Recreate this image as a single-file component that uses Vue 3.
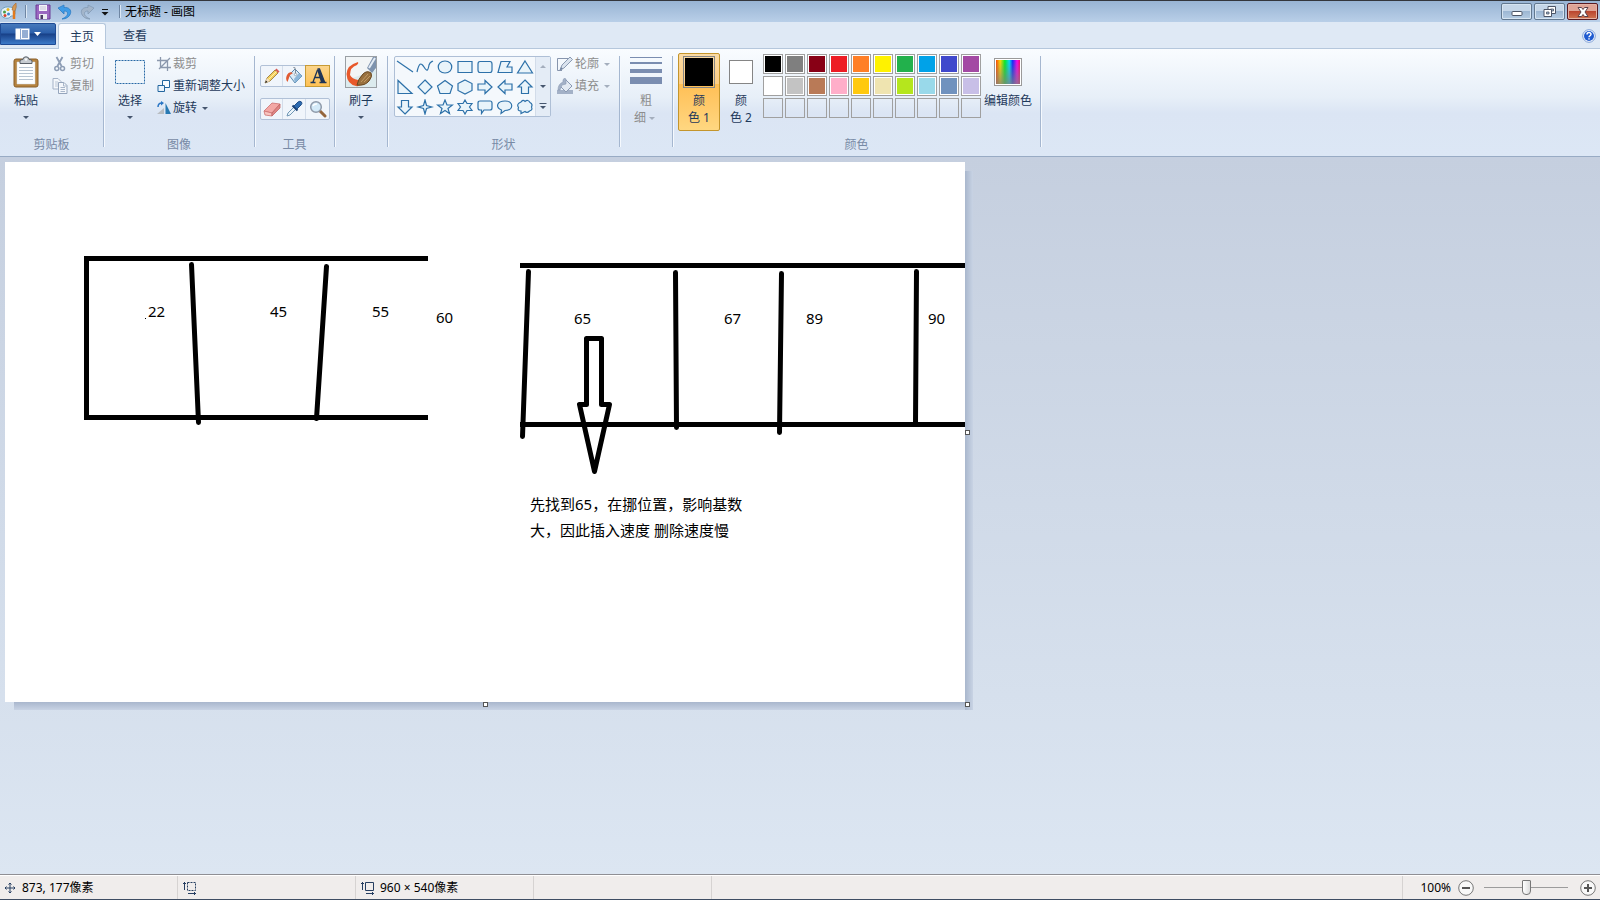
<template>
  <div class="paint">
    <header class="titlebar">
      <svg class="app-icon" width="18" height="18" viewBox="0 0 18 18">
        <path d="M1 11C0 6 4 3.500 9 4C14 4 16 7 15 11C14 14 11 12 10 14C9 16 2 16 1 11Z" fill="#e4f2fa" stroke="#6f9fbd" />
        <circle cx="4.500" cy="9" r="1.500" fill="#4c9c44" />
        <circle cx="8" cy="6.500" r="1.500" fill="#e8b420" />
        <circle cx="5" cy="12.500" r="1.500" fill="#d8432b" />
        <circle cx="8.500" cy="11" r="1.500" fill="#3c82cf" />
        <path d="M14 8V16" stroke="#e27a1e" stroke-width="2.500" />
        <path d="M12 7Q12 3 16 0Q17 4 15 8Z" fill="#d59a55" stroke="#a8652c" stroke-width=".6" />
      </svg>
      <i class="bar-sep"></i>
      <button class="quick" aria-label="保存">
        <svg width="16" height="16" viewBox="0 0 16 16">
          <path d="M1 1H15V15H1Z" fill="#9a66c0" stroke="#6c3d96" />
          <path d="M4 1H12V7H4Z" fill="#f4f4fa" />
          <path d="M5 3H11M5 5H11" stroke="#c6c3d6" />
          <path d="M4 10H12V15H4Z" fill="#ececf2" />
          <path d="M5.500 11H8V15H5.500Z" fill="#4a3a63" />
        </svg>
      </button>
      <button class="quick" aria-label="撤消">
        <svg width="16" height="16" viewBox="0 0 16 16">
          <path d="M1 4L7 1V3.500C12 3 14.500 6 13.500 9.500C12.500 13 9 15 5 15C9 13 10.500 11.500 10.500 9.500C10.500 7.500 9 7 7 7V10Z" fill="#3f9be6" stroke="#2c7cc4" stroke-width=".8" />
        </svg>
      </button>
      <button class="quick" aria-label="重做" disabled>
        <svg width="16" height="16" viewBox="0 0 16 16">
          <path d="M15 4L9 1V3.500C4 3 1.500 6 2.500 9.500C3.500 13 7 15 11 15C7 13 5.500 11.500 5.500 9.500C5.500 7.500 7 7 9 7V10Z" fill="#a3b5ca" stroke="#8199b4" stroke-width=".8" />
        </svg>
      </button>
      <button class="quick narrow" aria-label="自定义快速访问工具栏">
        <svg width="8" height="8" viewBox="0 0 8 8"><path d="M1 1.500H7" stroke="#111" /><path d="M.5 4H7.500L4 7.500Z" fill="#111" /></svg>
      </button>
      <i class="bar-sep"></i>
      <span class="title">无标题 - 画图</span>
      <div class="win-buttons">
        <button aria-label="最小化">
          <svg width="12" height="11" viewBox="0 0 12 11"><rect x="1" y="5.500" width="10" height="4" rx="1" fill="#fff" stroke="#4c5566" /></svg>
        </button>
        <button aria-label="还原">
          <svg width="14" height="11" viewBox="0 0 14 11">
            <path d="M5 .5H12.500V7.500H5Z" fill="#fff" stroke="#4c5566" /><path d="M7.500 3H10.500V5H7.500Z" fill="#9db4cf" stroke="#4c5566" stroke-width=".8" />
            <path d="M1 3.500H8.500V10.500H1Z" fill="#fff" stroke="#4c5566" /><path d="M3.500 6H6V8H3.500Z" fill="#9db4cf" stroke="#4c5566" stroke-width=".8" />
          </svg>
        </button>
        <button class="close" aria-label="关闭">
          <svg width="12" height="10" viewBox="0 0 12 10"><path d="M1 .5H4.500L6 2.500L7.500 .5H11L8 5L11 9.500H7.500L6 7.500L4.500 9.500H1L4 5Z" fill="#fff" stroke="#5b4048" /></svg>
        </button>
      </div>
    </header>

    <nav class="tabs">
      <button class="file-menu" aria-label="文件">
        <svg width="26" height="12" viewBox="0 0 26 12">
          <path d="M.5 .5H14.500V11.500H.5Z" fill="#fff" /><path d="M5.500 1V11" stroke="#8ba5cf" />
          <path d="M7 3H13M7 5H13M7 7H13M7 9H13" stroke="#2c5ea8" /><path d="M19 4H26L22.500 8Z" fill="#fff" />
        </svg>
      </button>
      <button class="tab active">主页</button>
      <button class="tab">查看</button>
      <button class="help" aria-label="帮助">
        <svg width="14" height="14" viewBox="0 0 14 14">
          <circle cx="7" cy="7" r="6.300" fill="#fff" stroke="#7d9fd6" /><circle cx="7" cy="7" r="5" fill="#1f5bd0" />
          <path d="M5 5.500C5 3 9 3 9 5.300C9 6.800 7 6.700 7 8.300M7 9.300V10.600" fill="none" stroke="#fff" stroke-width="1.500" />
        </svg>
      </button>
    </nav>

    <section class="ribbon">
      <div class="group clipboard">
        <div class="body">
          <button class="big">
            <svg width="26" height="32" viewBox="0 0 26 32">
              <rect x="1" y="3" width="24" height="28" rx="2" fill="#b5833f" stroke="#8a5f28" />
              <path d="M4 6H22V28H4Z" fill="#fdfefe" stroke="#d7dde4" stroke-width=".5" />
              <path d="M6 11.500H20M6 14.500H20M6 17.500H20M6 20.500H20M6 23.500H20" stroke="#b7c4d1" />
              <path d="M7 7.500V5Q7 3.500 10 3.500Q10 .8 13 .8Q16 .8 16 3.500Q19 3.500 19 5V7.500Z" fill="#c6cbd0" stroke="#596068" />
              <circle cx="13" cy="3.500" r="1.200" fill="#f6f8fa" />
            </svg>
            <span>粘贴</span><i class="arrow"></i>
          </button>
          <div class="stack">
            <button class="small" disabled>
              <svg width="16" height="16" viewBox="0 0 16 16"><path d="M4.500 1L9.500 10M10.500 1L5.500 10" stroke="#8d9db5" stroke-width="1.800" /><circle cx="4.800" cy="12.500" r="2" fill="none" stroke="#8d9db5" stroke-width="1.500" /><circle cx="10.500" cy="12.500" r="2" fill="none" stroke="#8d9db5" stroke-width="1.500" /></svg>
              剪切
            </button>
            <button class="small" disabled>
              <svg width="16" height="16" viewBox="0 0 16 16"><path d="M1 .5H6L9 3.500V11H1Z" fill="#f4f7fb" stroke="#a4b2c7" /><path d="M3 4H6M3 6H6M3 8H6" stroke="#bac6d6" /><path d="M6.500 4.500H12L15 7.500V15.500H6.500Z" fill="#f4f7fb" stroke="#95a5bc" /><path d="M11.500 4.500V8H15M8.500 9.500H13M8.500 11.500H13M8.500 13.500H13" fill="none" stroke="#a9b7ca" /></svg>
              复制
            </button>
          </div>
        </div>
        <div class="caption">剪贴板</div>
      </div>

      <div class="group image">
        <div class="body">
          <button class="big">
            <svg width="32" height="32" viewBox="0 0 32 32"><rect x="1.500" y="4.500" width="29" height="23" fill="#eef5fb" stroke="#2768a5" stroke-dasharray="2 1" /></svg>
            <span>选择</span><i class="arrow"></i>
          </button>
          <div class="stack">
            <button class="small" disabled>
              <svg width="14" height="14" viewBox="0 0 14 14"><path d="M3.500 0V10.500H14M0 3.500H10.500V14M2 12L13 1" fill="none" stroke="#8b98ad" stroke-width="1.300" /></svg>
              裁剪
            </button>
            <button class="small">
              <svg width="14" height="14" viewBox="0 0 14 14"><path d="M5.500 1.500H12.500V8.500H5.500Z" fill="#f8fbff" stroke="#23669f" /><path d="M1 6.500H7.500V12.500H1Z" fill="#e8f2fb" stroke="#23669f" /></svg>
              重新调整大小
            </button>
            <button class="small">
              <svg width="14" height="14" viewBox="0 0 14 14"><path d="M0 13L7 7V13Z" fill="#b9bdc2" /><path d="M8.500 2V13H14Z" fill="#2879b2" /><path d="M1 6Q1 2 5 2" fill="none" stroke="#2b76c5" stroke-width="1.500" /><path d="M4 0L7 2L4 4.500Z" fill="#2b76c5" /></svg>
              旋转<i class="arrow"></i>
            </button>
          </div>
        </div>
        <div class="caption">图像</div>
      </div>

      <div class="group tools">
        <div class="body">
          <div class="tool-row">
            <button aria-label="铅笔"><svg width="18" height="18" viewBox="0 0 18 18"><path d="M2 16L4 11L12 3L15 6L7 14Z" fill="#f3cf5e" stroke="#8f7030" stroke-width=".8" /><path d="M12 3L13.500 1.500L16.500 4.500L15 6Z" fill="#d65c57" /><path d="M4 11L7 14L2 16Z" fill="#f3dfc1" /><path d="M2 16L3 13.500L4.500 15Z" fill="#222" /><path d="M5.500 12.500L13.500 4.500" stroke="#fff0a8" /></svg></button>
            <button aria-label="用颜色填充"><svg width="18" height="18" viewBox="0 0 18 18"><path d="M4 8L10 2L17 9L10 16Z" fill="#dcebf6" stroke="#5787ad" /><path d="M10 16L17 9L14 6L9 12Z" fill="#8bb6d9" /><path d="M8 6Q4 4 2 8Q0 12 2.500 15Q4 11 5 8Z" fill="#e25a31" /><path d="M8 0Q10 -1 10.500 3V7" fill="none" stroke="#7d8894" /><circle cx="10.500" cy="7.500" r="1.200" fill="#f9fbfc" stroke="#788694" stroke-width=".6" /></svg></button>
            <button class="selected" aria-label="文本"><svg width="18" height="18" viewBox="0 0 18 18"><path d="M8.500 2H10.500L15.500 15M8.500 3L4 15M5.500 10.500H12M1.500 15.500H6.500M10.500 15.500H17.500" fill="none" stroke="#1f3557" stroke-width="1.300" /><path d="M8 2.500H10.500L16 15.500H12Z" fill="#1f3557" /></svg></button>
          </div>
          <div class="tool-row">
            <button aria-label="橡皮擦"><svg width="18" height="18" viewBox="0 0 18 18"><path d="M1 11L9 3L17 4L9 13Z" fill="#f3a8a5" stroke="#cd7070" stroke-width=".8" /><path d="M1 11L9 13V16L2 15Z" fill="#f8c5bf" stroke="#cd7070" stroke-width=".8" /><path d="M9 13L17 4V8L9 16Z" fill="#df8584" stroke="#c26664" stroke-width=".8" /></svg></button>
            <button aria-label="颜色选取器"><svg width="18" height="18" viewBox="0 0 18 18"><path d="M2 16L3 13L9 7L11 9L5 15Z" fill="#eaf4fb" stroke="#7197b5" /><path d="M7.500 5.500L12.500 10.500" stroke="#173f75" stroke-width="2" /><path d="M9 6L13 2Q15 .5 16.500 2Q17.500 3.500 16 5L12 9Z" fill="#2d6bb1" stroke="#204f89" /></svg></button>
            <button aria-label="放大镜"><svg width="18" height="18" viewBox="0 0 18 18"><path d="M11 11L16 16" stroke="#94663d" stroke-width="3" stroke-linecap="round" /><circle cx="7" cy="7" r="5.300" fill="#d4eaf8" stroke="#8f9aaa" stroke-width="1.500" /><path d="M4 6Q5 3.500 8 4" fill="none" stroke="#fff" stroke-width="1.500" /></svg></button>
          </div>
        </div>
        <div class="caption">工具</div>
      </div>

      <div class="group brush">
        <div class="body">
          <button class="big">
            <svg width="32" height="32" viewBox="0 0 32 32">
              <rect x=".5" y=".5" width="31" height="31" fill="#f2f5f6" stroke="#9a9fa4" />
              <path d="M1 24L31 14V31H1Z" fill="#dcebee" />
              <path d="M13 6Q2 9 1.500 18Q2 28 11 30Q15 31 18 27L13 24Q7 23 5 19Q5 11 12 9Q14 7 13 6Z" fill="#e8582a" />
              <path d="M22 12L28 1H31V12L27 17Z" fill="#7e93ae" /><path d="M24 12L30 2" stroke="#e4ecf5" stroke-width="2" />
              <path d="M12 29Q13 23 18 18Q22 14 26 17Q28 20 24 25Q20 30 12 29Z" fill="#99713f" stroke="#69471f" />
              <path d="M16 26L23 18M19 26L25 20" stroke="#c49b63" />
            </svg>
            <span>刷子</span><i class="arrow"></i>
          </button>
        </div>
      </div>

      <div class="group shapes">
        <div class="body">
          <div class="gallery">
            <div class="shape-grid">
              <button v-for="shape in shapes" :key="shape.name" :aria-label="shape.name">
                <svg width="18" height="16" viewBox="0 0 18 16"><path :d="shape.d" :fill="shape.open ? 'none' : '#e9f4fa'" stroke="#2d71a9" stroke-width="1.200" /></svg>
              </button>
            </div>
            <div class="scroller">
              <button aria-label="向上" disabled><i class="arrow up"></i></button>
              <button aria-label="向下"><i class="arrow"></i></button>
              <button aria-label="更多"><svg width="8" height="8" viewBox="0 0 8 8"><path d="M.5 1.500H7.500" stroke="#46566e" /><path d="M1 4H7L4 7Z" fill="#46566e" /></svg></button>
            </div>
          </div>
          <div class="stack">
            <button class="small" disabled>
              <svg width="16" height="16" viewBox="0 0 16 16"><path d="M11 2.500H.5V14.500H5" fill="none" stroke="#8795ad" /><path d="M3 14L5 9L13 1L15.500 3.500L7 12Z" fill="#dae3ee" stroke="#8a9ab2" /><path d="M3 14L4 11L6 13Z" fill="#71829d" /></svg>
              轮廓<i class="arrow"></i>
            </button>
            <button class="small" disabled>
              <svg width="16" height="16" viewBox="0 0 16 16"><path d="M0 12H16V16H0Z" fill="#a3b1c7" /><path d="M3 8L9 2L15 8L9 14Z" fill="#e3eaf3" stroke="#8999b2" /><path d="M6 4Q1 6 1 12H3L5 7L9 6V1Q7 -1 6 2Z" fill="#a3b1c7" stroke="#8999b2" stroke-width=".6" /></svg>
              填充<i class="arrow"></i>
            </button>
          </div>
        </div>
        <div class="caption">形状</div>
      </div>

      <div class="group size">
        <div class="body">
          <button class="big" disabled>
            <svg width="32" height="32" viewBox="0 0 32 32"><path d="M0 1H32V2H0ZM0 6H32V8H0ZM0 13H32V17H0ZM0 21H32V28H0Z" fill="#7a8db0" /></svg>
            <span>粗<br />细<i class="arrow"></i></span>
          </button>
        </div>
      </div>

      <div class="group colors">
        <div class="body">
          <button class="color-slot selected"><i class="swatch first"></i><span>颜<br />色 1</span></button>
          <button class="color-slot"><i class="swatch second"></i><span>颜<br />色 2</span></button>
          <div class="palette">
            <button v-for="(color, i) in palette" :key="i" :class="{ empty: !color }" :style="{ backgroundColor: color }" :aria-label="'颜色 ' + (i + 1)"></button>
          </div>
          <button class="big edit"><i class="spectrum"></i><span>编辑颜色</span></button>
        </div>
        <div class="caption">颜色</div>
      </div>
    </section>

    <main class="workspace">
      <div class="sheet">
        <svg class="drawing" width="960" height="540" viewBox="0 0 960 540">
          <g fill="none" stroke="#000" stroke-width="5" stroke-linecap="round" stroke-linejoin="round">
            <path d="M423 96.500H81.500V255.500H423" stroke-linecap="butt" stroke-linejoin="miter" />
            <path d="M515 103.500H960M515 262.500H960" stroke-linecap="butt" />
            <path d="M186.500 102.500L193.500 260.500M321.500 104.500L311.500 256.500" />
            <path d="M523.500 109.500L517.500 274.500M670.500 110.500L671.500 265.500M776.500 111.500L774.500 270.500M911.500 109.500L910.500 261.500" />
            <path d="M581.500 176.500H596.500V242.500H604.500L589.500 309.500L574.500 242.500H581.500Z" />
          </g>
          <rect x="140" y="156" width="1" height="1" />
          <text v-for="n in notes" :key="n.text" :x="n.x" :y="n.y">{{ n.text }}</text>
        </svg>
        <i class="handle east"></i>
        <i class="handle south"></i>
        <i class="handle corner"></i>
      </div>
    </main>

    <footer class="statusbar">
      <div class="cell">
        <svg width="12" height="12" viewBox="0 0 12 12"><path d="M6 1V11M1 6H11M4.500 2.500L6 1L7.500 2.500M4.500 9.500L6 11L7.500 9.500M2.500 4.500L1 6L2.500 7.500M9.500 4.500L11 6L9.500 7.500" fill="none" stroke="#263e61" /></svg>
        873, 177像素
      </div>
      <div class="cell">
        <svg width="14" height="14" viewBox="0 0 14 14"><path d="M1.500 1V9M0 2.500H3M5 12.500H13M11.500 11V14" stroke="#263e61" /><path d="M4.500 1.500H12.500V9.500H4.500Z" fill="none" stroke="#263e61" stroke-dasharray="2 1" /></svg>
      </div>
      <div class="cell">
        <svg width="14" height="14" viewBox="0 0 14 14"><path d="M1.500 1V9M0 2.500H3M5 12.500H13M11.500 11V14" stroke="#263e61" /><path d="M4.500 1.500H12.500V9.500H4.500Z" fill="none" stroke="#263e61" /></svg>
        960 × 540像素
      </div>
      <div class="cell"></div>
      <div class="zoom">
        <label for="zoom">{{ zoom }}%</label>
        <button aria-label="缩小" @click="zoom = Math.max(0, zoom - 10)"><svg width="16" height="16" viewBox="0 0 16 16"><circle cx="8" cy="8" r="7.300" fill="#f8f8f8" stroke="#777" /><path d="M4 8H12" stroke="#555" stroke-width="2" /></svg></button>
        <input id="zoom" v-model.number="zoom" type="range" min="0" max="200" />
        <button aria-label="放大" @click="zoom = Math.min(200, zoom + 10)"><svg width="16" height="16" viewBox="0 0 16 16"><circle cx="8" cy="8" r="7.300" fill="#f8f8f8" stroke="#777" /><path d="M4 8H12M8 4V12" stroke="#555" stroke-width="2" /></svg></button>
      </div>
    </footer>
  </div>
</template>

<script setup>
import { ref } from 'vue'

const zoom = ref(100)

const shapes = [
  { name: '直线', d: 'M1 2L17 13', open: true },
  { name: '曲线', d: 'M1 13C3 4 5 3 8 8C11 13 12 12 13 6C14 3 15 3 17 2', open: true },
  { name: '椭圆', d: 'M9 2C18 2 18 14 9 14C0 14 0 2 9 2Z' },
  { name: '矩形', d: 'M2 2.500H16V13.500H2Z' },
  { name: '圆角矩形', d: 'M4 2.500H14Q16 2.500 16 5V11Q16 13.500 14 13.500H4Q2 13.500 2 11V5Q2 2.500 4 2.500Z' },
  { name: '多边形', d: 'M5 2.500H14L11 8H16V13.500H2Z' },
  { name: '三角形', d: 'M9 2L16.500 14H1.500Z' },
  { name: '直角三角形', d: 'M2 1.500V14.500H16Z' },
  { name: '菱形', d: 'M9 1L16 8L9 15L2 8Z' },
  { name: '五边形', d: 'M9 1.500L16.500 7L14 14.500H4L1.500 7Z' },
  { name: '六边形', d: 'M9 1L16 4.500V11.500L9 15L2 11.500V4.500Z' },
  { name: '右箭头', d: 'M2 5H9V1.500L16 8L9 14.500V11H2Z' },
  { name: '左箭头', d: 'M16 5H9V1.500L2 8L9 14.500V11H16Z' },
  { name: '上箭头', d: 'M9 1L16 8H12.500V14.500H5.500V8H2Z' },
  { name: '下箭头', d: 'M9 15L16 8H12.500V1.500H5.500V8H2Z' },
  { name: '四角星', d: 'M9 1L10.500 6.500L16 8L10.500 9.500L9 15L7.500 9.500L2 8L7.500 6.500Z' },
  { name: '五角星', d: 'M9 1L11 6H16.500L12 9.500L13.500 14.500L9 11.500L4.500 14.500L6 9.500L1.500 6H7Z' },
  { name: '六角星', d: 'M9 1L11 4.500H16L13.500 8L16 11.500H11L9 15L7 11.500H2L4.500 8L2 4.500H7Z' },
  { name: '圆角矩形标注', d: 'M4 2H14Q16 2 16 4V9Q16 11 14 11H8L5.500 14.500V11H4Q2 11 2 9V4Q2 2 4 2Z' },
  { name: '椭圆形标注', d: 'M9 2C18 2 18 11.500 9 11.500L5 14.500L5.500 11C-1 8 1 2 9 2Z' },
  { name: '云形标注', d: 'M5 3Q7 0 9 2.500Q12 0 14 3.500Q17 5 15.500 8Q17 11 13.500 12Q11 14.500 9 12.500L5 14.500V12Q1 12 2.500 8.500Q0 5 5 3Z' }
]

// 最后一行是留给自定义颜色的空格
const palette = [
  '#000000', '#7f7f7f', '#880015', '#ed1c24', '#ff7f27', '#fff200', '#22b14c', '#00a2e8', '#3f48cc', '#a349a4',
  '#ffffff', '#c3c3c3', '#b97a57', '#ffaec9', '#ffc90e', '#efe4b0', '#b5e61d', '#99d9ea', '#7092be', '#c8bfe7',
  ...Array(10).fill(undefined)
]

const notes = [
  { text: '22', x: 143, y: 155 },
  { text: '45', x: 265, y: 155 },
  { text: '55', x: 367, y: 155 },
  { text: '60', x: 431, y: 161 },
  { text: '65', x: 569, y: 162 },
  { text: '67', x: 719, y: 162 },
  { text: '89', x: 801, y: 162 },
  { text: '90', x: 923, y: 162 },
  { text: '先找到65，在挪位置，影响基数', x: 525, y: 348 },
  { text: '大，因此插入速度 删除速度慢', x: 525, y: 374 }
]
</script>

<style>
body {
  margin: 0;
}
</style>

<style scoped>
.paint {
  display: flex;
  flex-direction: column;
  min-height: 100vh;
  font-family: "Noto Sans", "Noto Sans CJK SC", sans-serif;
  font-size: 12px;
  line-height: 16px;
  color: #1e395b;
}
button {
  margin: 0;
  padding: 0;
  border: 0;
  background: none;
  font: inherit;
  color: inherit;
}
button:disabled {
  color: #8d8d8d;
}
svg {
  display: block;
  flex: none;
}
.titlebar {
  display: flex;
  align-items: center;
  box-sizing: border-box;
  height: 22px;
  border-top: 1px solid #33363c;
  background: linear-gradient(#98b4d4, #b9cfe8);
}
.bar-sep {
  width: 1px;
  height: 13px;
  margin: 0 5px 0 7px;
  background: #6f86a3;
  box-shadow: 1px 0 #dce8f5;
}
.quick {
  display: flex;
  justify-content: center;
  width: 22px;
}
.bar-sep + .quick {
  margin-left: 1px;
}
.quick.narrow {
  width: 14px;
}
.title {
  color: #000;
}
.win-buttons {
  display: flex;
  gap: 2px;
  margin-left: auto;
  padding-right: 2px;
}
.win-buttons button {
  display: flex;
  align-items: center;
  justify-content: center;
  box-sizing: border-box;
  width: 31px;
  height: 17px;
  border: 1px solid #62788f;
  border-radius: 2px;
  background: linear-gradient(#c5d6e8 50%, #9db7d3 50%, #b5cce3);
  box-shadow: inset 0 0 0 1px #d6e4f1;
}
.win-buttons .close {
  border-color: #5a1b22;
  background: linear-gradient(#dfa496 50%, #bb4630 50%, #cf7552);
  box-shadow: inset 0 0 0 1px #e5b3a5;
}
.tabs {
  display: flex;
  box-sizing: border-box;
  height: 27px;
  padding-top: 1px;
  border-bottom: 1px solid #b5c7dc;
  background: #dfe9f5;
}
.file-menu {
  display: flex;
  align-items: center;
  justify-content: center;
  box-sizing: border-box;
  width: 56px;
  height: 22px;
  margin-right: 2px;
  border: 1px solid #1e4a94;
  border-radius: 0 2px 0 0;
  background: linear-gradient(#4679bb, #2b5fab 45%, #184087 50%, #3c7ac8);
}
.tab {
  box-sizing: border-box;
  width: 48px;
  height: 26px;
}
.tab.active {
  margin-right: 5px;
  border: 1px solid #b5c7dc;
  border-bottom: 0;
  border-radius: 3px 3px 0 0;
  background: #fafcff;
}
.help {
  margin-left: auto;
  padding-right: 4px;
}
.ribbon {
  display: flex;
  box-sizing: border-box;
  height: 108px;
  border-bottom: 1px solid #98abc4;
  background: linear-gradient(#f9fcff, #e7eff8 45%, #dbe5f4 60%, #dce7f5);
}
.group {
  position: relative;
  display: flex;
  flex-direction: column;
  box-sizing: border-box;
  padding: 4px 1px 3px 0;
}
.group::after {
  content: "";
  position: absolute;
  top: 7px;
  right: 0;
  width: 1px;
  height: 91px;
  background: #a5b7d0;
  box-shadow: 1px 0 #f5f9fe;
}
.body {
  display: flex;
  flex: 1;
  align-items: flex-start;
}
.caption {
  text-align: center;
  color: #788aa5;
}
.clipboard {
  width: 104px;
}
.image {
  width: 151px;
}
.tools {
  width: 80px;
}
.brush {
  width: 53px;
}
.shapes {
  width: 232px;
}
.size {
  width: 53px;
}
.colors {
  width: 368px;
}
.big {
  display: flex;
  flex-direction: column;
  align-items: center;
  gap: 4px;
  width: 52px;
  padding-top: 3px;
  line-height: 17px;
}
.stack {
  display: flex;
  flex-direction: column;
}
.small {
  display: flex;
  align-items: center;
  gap: 2px;
  height: 22px;
}
.image .small {
  padding-left: 1px;
}
.arrow {
  display: inline-block;
  width: 0;
  height: 0;
  margin: 3px;
  border: 3px solid transparent;
  border-top-color: #46566e;
  border-bottom: 0;
  vertical-align: middle;
}
.arrow.up {
  border-top: 0;
  border-bottom: 3px solid #a4aebd;
}
button:disabled .arrow {
  border-top-color: #a4aebd;
}
.tools .body {
  flex-direction: column;
  gap: 11px;
  padding: 12px 0 0 5px;
}
.tool-row {
  display: flex;
  border: 1px solid #b1c1d7;
  border-radius: 2px;
  background: #f0f5fb;
}
.tool-row button {
  display: flex;
  align-items: center;
  justify-content: center;
  box-sizing: border-box;
  width: 22px;
  height: 20px;
  border-right: 1px solid #d3ddea;
}
.tool-row button + button {
  width: 23px;
}
.tool-row button:last-child {
  border-right: 0;
}
.tool-row .selected {
  background: linear-gradient(#fbd58c, #ffc154);
  box-shadow: 0 0 0 1px #c79b35;
}
.shapes .body {
  gap: 6px;
  padding-left: 6px;
}
.gallery {
  display: flex;
  margin-top: 3px;
  border: 1px solid #aebfd6;
  border-radius: 2px;
  background: #f4f8fc;
}
.shape-grid {
  display: grid;
  grid-template-columns: repeat(7, 20px);
  padding-right: 1px;
}
.shape-grid button {
  display: grid;
  place-items: center;
  height: 19px;
}
.shape-grid {
  row-gap: 1px;
}
.scroller {
  display: flex;
  flex-direction: column;
  width: 14px;
  background: #e4ecf6;
  box-shadow: -1px 0 #d2dce9;
}
.scroller button {
  display: grid;
  place-items: center;
  flex: 1;
}
.color-slot {
  display: flex;
  flex-direction: column;
  align-items: center;
  box-sizing: border-box;
  width: 42px;
  height: 78px;
  padding-top: 2px;
  border: 1px solid transparent;
  border-radius: 2px;
  line-height: 17px;
}
.color-slot.selected {
  border-color: #c4952c;
  background: linear-gradient(#fbdba4, #fdce85 39%, #ffbf56 40%, #ffd781);
}
.color-slot span {
  margin-top: 4px;
}
.swatch {
  box-sizing: border-box;
  width: 32px;
  height: 32px;
  padding: 1px;
  border: 1px solid #858585;
  background: #000 content-box;
}
.swatch.second {
  width: 24px;
  height: 24px;
  margin: 4px;
  padding: 0;
  background: #fff;
}
.colors .body {
  padding-left: 5px;
}
.palette {
  display: grid;
  grid-template-columns: repeat(10, 20px);
  gap: 2px;
  padding: 1px 0 0 1px;
}
.palette button {
  box-sizing: border-box;
  height: 20px;
  border: 1px solid #a0a0a0;
  box-shadow: inset 0 0 0 1px #fff;
}
.palette .empty {
  box-shadow: none;
}
.edit {
  width: 54px;
}
.spectrum {
  box-sizing: border-box;
  width: 28px;
  height: 28px;
  margin: 2px;
  border: 1px solid #9a9a9a;
  box-shadow: inset 0 0 0 1px #fff;
  background: linear-gradient(transparent, #808080cc), linear-gradient(90deg, #f20, #fd0 20%, #0e2 38%, #0df 55%, #12f 68%, #f0e 85%, #f03);
}
.workspace {
  flex: 1;
  padding: 5px;
  background: linear-gradient(#c5cfdf, #d6e0ed 75%, #dce6f2);
}
.sheet {
  position: relative;
  width: max-content;
  background: #fff;
}
.sheet::before,
.sheet::after {
  content: "";
  position: absolute;
}
.sheet::before {
  top: 9px;
  bottom: -8px;
  left: 100%;
  width: 8px;
  background: linear-gradient(90deg, #a9b7cd, #c8d3e4);
}
.sheet::after {
  top: 100%;
  left: 9px;
  right: 0;
  height: 8px;
  background: linear-gradient(#a9b7cd, #c8d3e4);
}
.drawing text {
  font-size: 15px;
  fill: #000;
}
.handle {
  position: absolute;
  z-index: 1;
  box-sizing: border-box;
  width: 5px;
  height: 5px;
  border: 1px solid #555;
  background: #fff;
}
.east {
  left: 100%;
  top: 268px;
}
.south {
  left: 478px;
  top: 100%;
}
.corner {
  left: 100%;
  top: 100%;
}
.statusbar {
  display: flex;
  box-sizing: border-box;
  height: 26px;
  padding-top: 1px;
  border-top: 1px solid #8f8f94;
  border-bottom: 1px solid #3e4d63;
  background: #f0edec;
  box-shadow: inset 0 1px #fff;
  color: #000;
}
.cell {
  display: flex;
  align-items: center;
  gap: 6px;
  box-sizing: border-box;
  width: 178px;
  padding-left: 4px;
  border-right: 1px solid #d6d3d2;
}
.cell + .cell {
  gap: 5px;
  padding-left: 5px;
}
.zoom {
  display: flex;
  align-items: center;
  gap: 7px;
  margin-left: auto;
  padding: 0 4px 0 17px;
  border-left: 1px solid #d6d3d2;
}
.zoom input {
  appearance: none;
  width: 84px;
  height: 16px;
  margin: 0 5px 0 3px;
  background: linear-gradient(#9c9c9c, #9c9c9c) center / 100% 1px no-repeat;
}
.zoom input::-webkit-slider-thumb {
  appearance: none;
  width: 9px;
  height: 15px;
  border: 1px solid #777;
  border-radius: 1px 1px 4px 4px;
  background: linear-gradient(90deg, #fff, #ddd);
}
</style>
